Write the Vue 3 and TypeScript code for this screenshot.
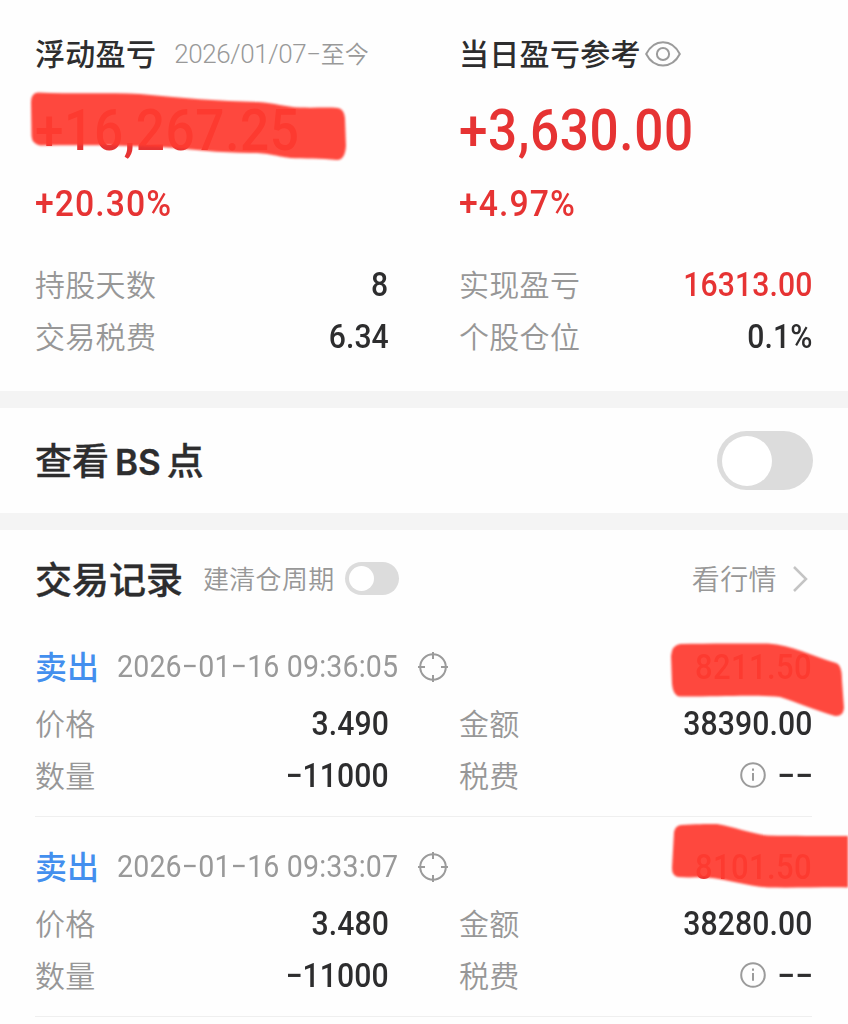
<script setup lang="ts">
interface TradeRecord {
  time: string
  profit: string
  price: string
  amount: string
  quantity: string
}

const records: TradeRecord[] = [
  { time: '2026−01−16 09:36:05', profit: '8211.50', price: '3.490', amount: '38390.00', quantity: '−11000' },
  { time: '2026−01−16 09:33:07', profit: '8101.50', price: '3.480', amount: '38280.00', quantity: '−11000' },
]
</script>

<template>
  <main class="page">
    <section class="summary">
      <div class="col">
        <div class="title-row">
          <h2 class="title">浮动盈亏</h2>
          <span class="period">2026/01/07−<span class="period-cjk">至今</span></span>
        </div>
        <div class="big">+16,267.25</div>
        <div class="pct">+20.30%</div>
        <div class="row"><span class="label">持股天数</span><span class="num">8</span></div>
        <div class="row"><span class="label">交易税费</span><span class="num">6.34</span></div>
      </div>
      <div class="col">
        <div class="title-row">
          <h2 class="title">当日盈亏参考</h2>
          <svg class="eye" width="36" height="28" viewBox="0 0 36 28">
            <path d="M1.2 14C5 6.500 11 2.200 18 2.200S31 6.500 34.800 14C31 21.500 25 25.400 18 25.400S5 21.500 1.200 14Z" />
            <circle cx="18" cy="14" r="6.100" />
          </svg>
        </div>
        <div class="big">+3,630.00</div>
        <div class="pct">+4.97%</div>
        <div class="row"><span class="label">实现盈亏</span><span class="num red">16313.00</span></div>
        <div class="row"><span class="label">个股仓位</span><span class="num">0.1%</span></div>
      </div>
    </section>

    <section class="points">
      <h3 class="heading points-title">查看<span class="latin">BS</span>点</h3>
      <span class="switch"><i></i></span>
    </section>

    <section class="trades">
      <header class="trades-head">
        <h3 class="heading">交易记录</h3>
        <span class="cycle">建清仓周期</span>
        <span class="switch small"><i></i></span>
        <span class="market">看行情</span>
        <svg class="chevron" width="16" height="28" viewBox="0 0 16 28"><path d="M2 2L14 14L2 26" /></svg>
      </header>

      <article v-for="r in records" :key="r.time" class="record">
        <div class="record-head">
          <span class="side">卖出</span>
          <span class="time">{{ r.time }}</span>
          <svg class="target" width="32" height="32" viewBox="0 0 32 32">
            <circle cx="16" cy="16" r="12.800" />
            <path d="M16 1V8M16 24V31M1 16H8M24 16H31" />
          </svg>
          <span class="num red profit">{{ r.profit }}</span>
        </div>
        <div class="grid">
          <div class="row"><span class="label">价格</span><span class="num">{{ r.price }}</span></div>
          <div class="row"><span class="label">金额</span><span class="num">{{ r.amount }}</span></div>
          <div class="row"><span class="label">数量</span><span class="num">{{ r.quantity }}</span></div>
          <div class="row">
            <span class="label">税费</span>
            <svg class="info" width="26" height="26" viewBox="0 0 26 26">
              <circle cx="13" cy="13" r="11.800" />
              <path d="M13 11V18.800M13 6.600V8.800" />
            </svg>
            <span class="num dashes">−−</span>
          </div>
        </div>
      </article>
    </section>

    <svg class="marker" width="848" height="1024" viewBox="0 0 848 1024">
      <path d="M38 92.500C70 94 110 92.500 140 94C180 98 220 101 258 102C275 103 285 107 300 107.500C315 108 328 107 338 108Q344 109 345 118L346 146Q345 160 337 160C320 158 305 159 290 158C275 156 270 153 250 153C220 153 190 149 160 147C120 145 80 145 40 145.500Q32 144 31.500 136L31 102Q31 93 38 92.500Z" />
      <path d="M680 644C710 643 745 643.500 768 643.500C792 645 812 656 836 663Q842 665 842 680L844 708Q843 717 835 716C815 710 796 702 780 697C755 694 710 697 680 696.500Q673 696 672 684L671 656Q672 645 680 644Z" />
      <path d="M681 825C695 824 705 824 717 824C735 827 748 833 768 835.500C795 836 820 836 854 836V887.500C825 887 795 888 768 887.500C745 886 728 879 706 877.500C698 877 688 878 678 877Q672 876 672 868L674 832Q675 826 681 825Z" />
    </svg>
  </main>
</template>

<style>
body { margin: 0; background: #fff; }
</style>

<style scoped>
.page {
  position: relative;
  width: 848px;
  height: 1024px;
  overflow: hidden;
  background: #fefefe;
  color: #2d2d2e;
  font-family: Roboto, "Noto Sans CJK SC", sans-serif;
}
h2, h3 { margin: 0; }
.summary {
  display: grid;
  grid-template-columns: 353px 353px;
  column-gap: 71px;
  height: 391px;
  padding: 28px 36px 0 35px;
  box-sizing: border-box;
}
.title-row { display: flex; align-items: center; height: 52px; }
.title {
  padding-bottom: 3px;
  font: 500 30px/49px "Noto Sans CJK SC", sans-serif;
  letter-spacing: 0.3px;
  white-space: nowrap;
}
.period {
  margin-left: 18px;
  color: #999;
  font-size: 26px;
  font-weight: 300;
  line-height: 52px;
  letter-spacing: -0.4px;
  white-space: nowrap;
}
.period-cjk { font: 350 24px/40px "Noto Sans CJK SC", sans-serif; letter-spacing: 0; }
.eye { margin-left: 4px; }
.eye, .target, .info, .chevron { flex: none; fill: none; stroke: #9b9b9b; stroke-width: 2; }
.big {
  height: 98px;
  color: #e63333;
  font-size: 57px;
  font-weight: 500;
  line-height: 101px;
  letter-spacing: 0.7px;
  white-space: nowrap;
  transform: scaleX(0.9);
  transform-origin: left;
}
.pct {
  height: 81px;
  color: #e63333;
  font-size: 37.500px;
  font-weight: 500;
  line-height: 51px;
  letter-spacing: 1.2px;
  transform: scaleX(0.9);
  transform-origin: left;
}
.row { display: flex; align-items: center; height: 51.500px; }
.label {
  margin-right: auto;
  padding-bottom: 3px;
  color: #979797;
  font: 350 30px/46px "Noto Sans CJK SC", sans-serif;
  letter-spacing: 0.3px;
}
.num {
  font-size: 33.500px;
  font-weight: 500;
  line-height: 50px;
  letter-spacing: 0.1px;
  white-space: nowrap;
  transform: scaleX(0.9);
  transform-origin: right;
  margin-right: -0.500px;
  padding-top: 1px;
}
.red { color: #e63333; }
.points {
  display: flex;
  align-items: center;
  justify-content: space-between;
  height: 105px;
  padding: 0 35px;
  border-top: 17px solid #f4f4f4;
  border-bottom: 17px solid #f4f4f4;
}
.heading {
  font: 500 37px/54px "Noto Sans CJK SC", sans-serif;
  white-space: nowrap;
  -webkit-text-stroke: 0.300px #2d2d2e;
}
.latin { margin: 0 6px; font-family: Inter, sans-serif; font-weight: 600; font-size: 35px; }
.switch {
  box-sizing: border-box;
  width: 96px;
  height: 59px;
  padding: 4.500px;
  border-radius: 30px;
  background: #dcdcdc;
}
.switch i { display: block; width: 50px; height: 50px; border-radius: 50%; background: #fff; }
.switch.small { width: 54px; height: 33px; margin-left: 10px; padding: 4px; }
.switch.small i { width: 25px; height: 25px; }
.trades-head {
  display: flex;
  align-items: center;
  box-sizing: border-box;
  height: 87px;
  padding: 10px 36px 0 35px;
}
.trades-head .heading { padding-bottom: 1px; }
.cycle {
  margin-left: 20px;
  padding-bottom: 2px;
  color: #979797;
  font: 350 26px/40px "Noto Sans CJK SC", sans-serif;
  letter-spacing: 0.3px;
}
.market {
  margin-left: auto;
  padding-bottom: 2px;
  color: #979797;
  font: 350 28px/40px "Noto Sans CJK SC", sans-serif;
  letter-spacing: 0.4px;
}
.chevron { margin: 0 4px 0 15px; stroke: #c4c4c4; stroke-width: 2.500; }
.record {
  box-sizing: border-box;
  height: 200px;
  margin: 0 36px 0 35px;
  padding-top: 19px;
  border-bottom: 1px solid #efefef;
}
.record-head { display: flex; align-items: center; height: 62.500px; margin-top: -0.500px; }
.side { padding-bottom: 4px; color: #438fee; font: 500 32px/50px "Noto Sans CJK SC", sans-serif; }
.time {
  flex: none;
  width: 280px;
  margin-left: 18px;
  color: #999;
  font-size: 31px;
  white-space: nowrap;
  letter-spacing: 0.15px;
  transform: scaleX(0.922);
  transform-origin: left;
}
.target { margin-left: 20px; }
.profit { margin-left: auto; font-size: 34.500px; letter-spacing: 0.4px; }
.grid { display: grid; grid-template-columns: 353px 353px; column-gap: 71px; }
.info { margin-right: 9px; }
.dashes { transform: scaleX(0.95); }
.marker { position: absolute; inset: 0; fill: #ff3b30; opacity: 0.93; filter: blur(1.200px); pointer-events: none; }
</style>
